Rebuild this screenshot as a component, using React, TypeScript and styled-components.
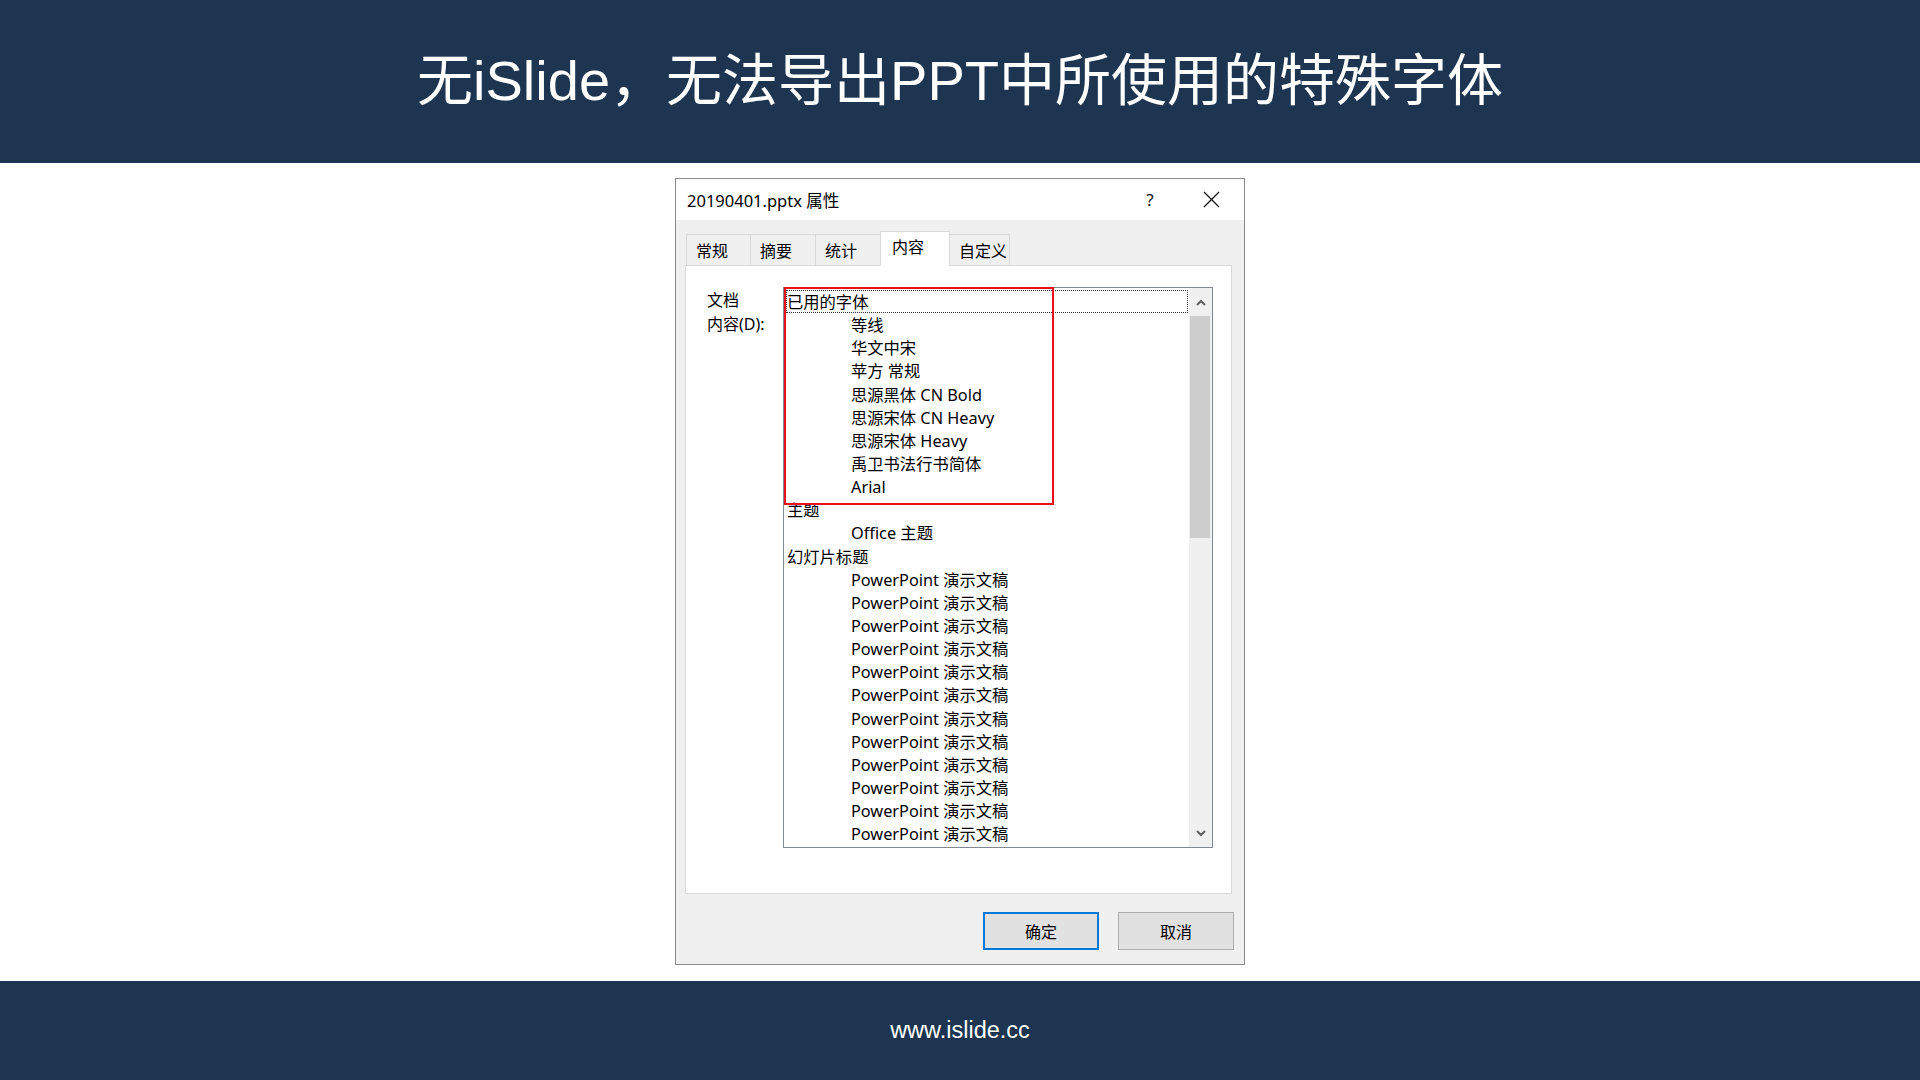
import styled, { createGlobalStyle } from 'styled-components';

const GlobalStyle = createGlobalStyle`
  html, body {
    margin: 0;
    padding: 0;
    background: #ffffff;
  }
  * {
    box-sizing: border-box;
  }
`;

const NAVY = '#1d3550';
const UI_FONT = `"Noto Sans", "Noto Sans CJK SC", sans-serif`;

const Page = styled.div`
  width: 1920px;
  height: 1080px;
  display: flex;
  flex-direction: column;
  background: #ffffff;
`;

const Header = styled.header`
  height: 163px;
  background: ${NAVY};
  display: flex;
  align-items: center;
  justify-content: center;
  padding-bottom: 12px;
`;

const Headline = styled.h1`
  margin: 0;
  color: #ffffff;
  font-family: "Liberation Sans", "Noto Sans CJK SC", sans-serif;
  font-size: 56px;
  font-weight: 400;
  letter-spacing: 0;
`;

const Stage = styled.main`
  flex: 1;
  display: flex;
  justify-content: center;
  align-items: flex-start;
  padding-top: 15px;
`;

const Footer = styled.footer`
  height: 99px;
  background: ${NAVY};
  display: flex;
  align-items: center;
  justify-content: center;
  color: #ffffff;
  font-family: "Liberation Sans", Arial, sans-serif;
  font-size: 23.5px;
`;

const Dialog = styled.div`
  width: 570px;
  height: 787px;
  border: 1px solid #8a8a8a;
  background: #f0f0f0;
  display: flex;
  flex-direction: column;
  font-family: ${UI_FONT};
  color: #000000;
`;

const TitleBar = styled.div`
  height: 41px;
  background: #ffffff;
  display: flex;
  align-items: center;
  padding: 0 0 0 11px;
`;

const TitleText = styled.div`
  flex: 1;
  font-size: 16.5px;
`;

const TitleButton = styled.div<{ $w: number }>`
  width: ${({ $w }) => $w}px;
  height: 41px;
  display: flex;
  align-items: center;
  justify-content: center;
  font-size: 17px;
  color: #111;
`;

const Body = styled.div`
  flex: 1;
  display: flex;
  flex-direction: column;
  padding: 12px 0 13px 9px;
`;

const TabStrip = styled.div`
  height: 34px;
  display: flex;
  align-items: flex-end;
  padding-left: 2px;
  position: relative;
  z-index: 1;
  margin-bottom: -1px;
`;

const Tab = styled.div<{ $w: number; $active?: boolean }>`
  width: ${({ $w }) => $w}px;
  height: ${({ $active }) => ($active ? 35 : 32)}px;
  padding-left: ${({ $active }) => ($active ? 11 : 9)}px;
  padding-top: ${({ $active }) => ($active ? 3 : 4)}px;
  border: 1px solid #d9d9d9;
  border-bottom: ${({ $active }) => ($active ? '1px solid #ffffff' : '1px solid #d9d9d9')};
  margin-left: -1px;
  background: ${({ $active }) => ($active ? '#ffffff' : '#f0f0f0')};
  font-size: 16px;
  line-height: 24px;
`;

const Panel = styled.div`
  width: 547px;
  height: 629px;
  background: #ffffff;
  border: 1px solid #d9d9d9;
  padding: 21px 0 0 21px;
  display: flex;
  align-items: flex-start;
`;

const FieldLabel = styled.div`
  width: 76px;
  font-size: 16px;
  line-height: 24px;
  padding-top: 1px;
`;

const ListBox = styled.div`
  width: 430px;
  height: 561px;
  border: 1px solid #828790;
  background: #ffffff;
  display: flex;
`;

const ListContent = styled.div`
  flex: 1;
  padding: 2px 1px 0 2px;
  font-size: 16.3px;
`;

const Row = styled.div<{ $indent?: boolean; $focused?: boolean }>`
  height: 23.15px;
  line-height: 22px;
  padding-left: ${({ $indent }) => ($indent ? 64 : 0)}px;
  border: 1px ${({ $focused }) => ($focused ? 'dotted #333' : 'solid transparent')};
  border-bottom: none;
  white-space: nowrap;
`;

const FirstRow = styled(Row)`
  border-bottom: 1px dotted #333;
`;

const Highlight = styled.div`
  position: relative;

  &::after {
    content: '';
    position: absolute;
    top: -3px;
    left: -2px;
    width: 266px;
    height: 214px;
    border: 2px solid #e8101c;
    pointer-events: none;
  }
`;

const ScrollBar = styled.div`
  width: 23px;
  background: #f0f0f0;
  display: flex;
  flex-direction: column;
`;

const ScrollArrow = styled.div`
  height: 28px;
  display: flex;
  align-items: center;
  justify-content: center;
`;

const ScrollThumb = styled.div`
  height: 222px;
  margin: 0 2px 0 1px;
  background: #cdcdcd;
`;

const ScrollTrack = styled.div`
  flex: 1;
`;

const ButtonRow = styled.div`
  display: flex;
  justify-content: flex-end;
  gap: 19px;
  padding-right: 10px;
  margin-top: 18px;
`;

const DialogButton = styled.button<{ $default?: boolean }>`
  width: 116px;
  height: 38px;
  background: #e1e1e1;
  border: ${({ $default }) => ($default ? '2px solid #0078d7' : '1px solid #adadad')};
  font-family: ${UI_FONT};
  font-size: 16px;
  color: #000;
  padding: 0;
`;

const Chevron = ({ up }: { up?: boolean }) => (
  <svg width="10" height="7" viewBox="0 0 10 7">
    <polyline
      points={up ? '1,6 5,2 9,6' : '1,1 5,5 9,1'}
      fill="none"
      stroke="#606060"
      strokeWidth="2"
    />
  </svg>
);

const CloseIcon = () => (
  <svg width="17" height="17" viewBox="0 0 17 17">
    <path d="M1 1 L16 16 M16 1 L1 16" stroke="#111" strokeWidth="1.3" fill="none" />
  </svg>
);

const fonts = [
  '等线',
  '华文中宋',
  '苹方 常规',
  '思源黑体 CN Bold',
  '思源宋体 CN Heavy',
  '思源宋体 Heavy',
  '禹卫书法行书简体',
  'Arial',
];

const tabs = [
  { name: '常规', w: 65 },
  { name: '摘要', w: 66 },
  { name: '统计', w: 66 },
  { name: '内容', w: 70, active: true },
  { name: '自定义', w: 61 },
];

export default function App() {
  return (
    <>
      <GlobalStyle />
      <Page>
        <Header>
          <Headline>无iSlide，无法导出PPT中所使用的特殊字体</Headline>
        </Header>
        <Stage>
          <Dialog>
            <TitleBar>
              <TitleText>20190401.pptx 属性</TitleText>
              <TitleButton $w={24}>?</TitleButton>
              <TitleButton $w={37} />
              <TitleButton $w={24}>
                <CloseIcon />
              </TitleButton>
              <TitleButton $w={21} />
            </TitleBar>
            <Body>
              <TabStrip>
                {tabs.map((t) => (
                  <Tab key={t.name} $w={t.w} $active={t.active}>
                    {t.name}
                  </Tab>
                ))}
              </TabStrip>
              <Panel>
                <FieldLabel>
                  文档
                  <br />
                  内容(D):
                </FieldLabel>
                <ListBox>
                  <ListContent>
                    <Highlight>
                      <FirstRow $focused>已用的字体</FirstRow>
                      {fonts.map((f) => (
                        <Row key={f} $indent>
                          {f}
                        </Row>
                      ))}
                    </Highlight>
                    <Row>主题</Row>
                    <Row $indent>Office 主题</Row>
                    <Row>幻灯片标题</Row>
                    {Array.from({ length: 12 }).map((_, i) => (
                      <Row key={i} $indent>
                        PowerPoint 演示文稿
                      </Row>
                    ))}
                  </ListContent>
                  <ScrollBar>
                    <ScrollArrow>
                      <Chevron up />
                    </ScrollArrow>
                    <ScrollThumb />
                    <ScrollTrack />
                    <ScrollArrow>
                      <Chevron />
                    </ScrollArrow>
                  </ScrollBar>
                </ListBox>
              </Panel>
              <ButtonRow>
                <DialogButton $default>确定</DialogButton>
                <DialogButton>取消</DialogButton>
              </ButtonRow>
            </Body>
          </Dialog>
        </Stage>
        <Footer>www.islide.cc</Footer>
      </Page>
    </>
  );
}
